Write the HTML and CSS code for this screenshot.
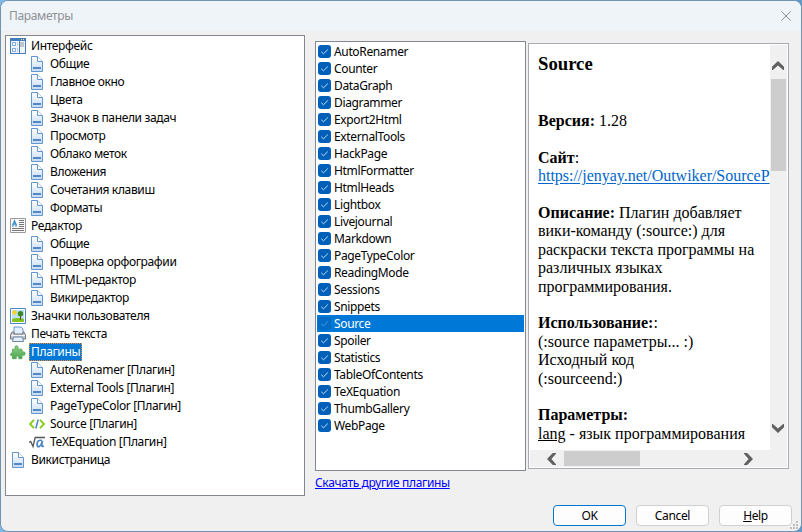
FILE: index.html
```
<!DOCTYPE html>
<html lang="ru">
<head>
<meta charset="utf-8">
<title>Параметры</title>
<link rel="stylesheet" href="styles.css">
</head>
<body>
<svg class="defs" width="0" height="0" aria-hidden="true">
  <defs>
    <linearGradient id="paper" x1="0" y1="0" x2="0" y2="1"><stop offset="0" stop-color="#fff"/><stop offset="1" stop-color="#c4daf4"/></linearGradient>
    <linearGradient id="leaf" x1="0" y1="0" x2="0" y2="1"><stop offset="0" stop-color="#8fd082"/><stop offset="1" stop-color="#4fa552"/></linearGradient>
  </defs>
  <symbol id="page" viewBox="0 0 16 16">
    <path d="M2.5.5h6l5 5v10h-11z" fill="url(#paper)" stroke="#6496d0"/>
    <path d="M8.5.5v5h5" fill="#fff" stroke="#6496d0"/>
    <path d="M4 11h8v2H4z" fill="#5288c8"/>
  </symbol>
  <symbol id="layout" viewBox="0 0 16 16">
    <path d="M0 0h16v16H0z" fill="#437dbe"/><path d="M1 3h8v12H1zM10 3h5v12h-5z" fill="#f0f5fa"/>
    <path d="M2.500 4.500h3v3h-3zM2.500 10.500h3v3h-3z" fill="#fff" stroke="#7ba6d6"/><path d="M7 4h1v4H7zM7 10h1v4H7z" fill="#bdd2e9"/><path d="M10 4h4v5h-4z" fill="#c5c5c5"/><path d="M11 1h1v1h-1zM13 1h1v1h-1z" fill="#ffe37a"/>
  </symbol>
  <symbol id="article" viewBox="0 0 16 16">
    <path d="M.5.5h15v14H.5z" fill="#fafafa" stroke="#999"/>
    <path d="M2.500 7.500 4.500 3l2 4.500M3.500 6h2" fill="none" stroke="#3f91cc" stroke-width="1.400"/><path d="M2 8h2M5 8h2" stroke="#3f91cc"/>
    <path d="M9 2.500h5M9 4.500h5M9 6.500h5M9 8.500h5M2 10.500h12M2 12.500h12" stroke="#666" stroke-width=".9"/>
  </symbol>
  <symbol id="picture" viewBox="0 0 16 16">
    <path d="M.5.5h15v15H.5z" fill="#fff" stroke="#4c89c9"/><path d="M2 2h12v12H2z" fill="#bbe2f7"/><path d="M2 11q5-2 12 0v3H2z" fill="#82c31d"/><circle cx="4.500" cy="4.500" r="2.200" fill="#ffcf27"/><path d="M10 7h1v5h-1z" fill="#6c4b21"/><circle cx="10.500" cy="5.800" r="2.700" fill="#3e8620"/>
  </symbol>
  <symbol id="printer" viewBox="0 0 16 16">
    <path d="M4 8V1h7l2 2v5" fill="#e4f0fd" stroke="#6797cf"/><path d="m2 6-1.500 3v4h15V9L14 6h-1v2H4V6z" fill="#c9cace" stroke="#73767d"/><path d="M1 9.500h14" stroke="#f4f4f4"/><path d="M3.500 11h9l1 4.500h-11z" fill="#e5effb" stroke="#6f88aa"/>
  </symbol>
  <symbol id="puzzle" viewBox="0 0 16 16">
    <path d="M2.500 5.200H5.500Q4 2 6.400 1.700 9 2 7.800 5.200H12v3q3-1.300 3.200 1.300T12 11v3.700H8.700q.8-2.700-1.200-2.700t-1.200 2.700H2.500v-3.200Q0 12 .5 10.200t2-1.500z" fill="url(#leaf)" stroke="#58aa56" stroke-width=".9"/>
  </symbol>
  <symbol id="code" viewBox="0 0 16 16">
    <path d="M5 3.800 1 8l4 4.200M11 3.800 15 8l-4 4.200" fill="none" stroke="#8cc914" stroke-width="1.900"/><path d="m9.200 3.500-2.400 9" stroke="#508acb" stroke-width="1.600"/>
  </symbol>
  <symbol id="root" viewBox="0 0 16 16">
    <path d="M0 8.500 1.700 7.500 4 12.500 6.200 3.500H16" fill="none" stroke="#555" stroke-width="1.300"/><path d="M13 6.500Q8.500 5.300 8 9.700q0 4 2.500 2.700 2-1.400 3-5.700-.9 4.400-.4 5.500.6.700 1.700-.5" fill="none" stroke="#4c86c7" stroke-width="1.700"/>
  </symbol>
  <symbol id="check" viewBox="0 0 13 13"><path d="m3.300 6.800 2.200 2 4.300-4.200" fill="none" stroke="currentColor" stroke-width=".9"/></symbol>
  <symbol id="chevron" viewBox="0 0 12 10"><path d="M0 9V5.800L6 0l6 5.800V9h-.8L6 4.400.8 9z" fill="#606060"/></symbol>
</svg>
<div class="window">
  <header class="titlebar"><span class="title">Параметры</span><svg class="close" viewBox="0 0 10 10"><path d="m.3.3 9.400 9.400M9.700.3.3 9.700" stroke="#8b8f94"/></svg></header>
  <main class="content">
    <ul class="tree">
      <li><svg><use href="#layout"/></svg><span>Интерфейс</span></li>
      <li class="child"><svg><use href="#page"/></svg><span>Общие</span></li>
      <li class="child"><svg><use href="#page"/></svg><span>Главное окно</span></li>
      <li class="child"><svg><use href="#page"/></svg><span>Цвета</span></li>
      <li class="child"><svg><use href="#page"/></svg><span>Значок в панели задач</span></li>
      <li class="child"><svg><use href="#page"/></svg><span>Просмотр</span></li>
      <li class="child"><svg><use href="#page"/></svg><span>Облако меток</span></li>
      <li class="child"><svg><use href="#page"/></svg><span>Вложения</span></li>
      <li class="child"><svg><use href="#page"/></svg><span>Сочетания клавиш</span></li>
      <li class="child"><svg><use href="#page"/></svg><span>Форматы</span></li>
      <li><svg><use href="#article"/></svg><span>Редактор</span></li>
      <li class="child"><svg><use href="#page"/></svg><span>Общие</span></li>
      <li class="child"><svg><use href="#page"/></svg><span>Проверка орфографии</span></li>
      <li class="child"><svg><use href="#page"/></svg><span>HTML-редактор</span></li>
      <li class="child"><svg><use href="#page"/></svg><span>Викиредактор</span></li>
      <li><svg><use href="#picture"/></svg><span>Значки пользователя</span></li>
      <li><svg><use href="#printer"/></svg><span>Печать текста</span></li>
      <li class="selected"><svg><use href="#puzzle"/></svg><span>Плагины</span></li>
      <li class="child"><svg><use href="#page"/></svg><span>AutoRenamer [Плагин]</span></li>
      <li class="child"><svg><use href="#page"/></svg><span>External Tools [Плагин]</span></li>
      <li class="child"><svg><use href="#page"/></svg><span>PageTypeColor [Плагин]</span></li>
      <li class="child"><svg><use href="#code"/></svg><span>Source [Плагин]</span></li>
      <li class="child"><svg><use href="#root"/></svg><span>TeXEquation [Плагин]</span></li>
      <li><svg><use href="#page"/></svg><span>Викистраница</span></li>
    </ul>
    <section class="plugins">
      <ul class="checklist">
        <li><svg><use href="#check"/></svg><span>AutoRenamer</span></li>
        <li><svg><use href="#check"/></svg><span>Counter</span></li>
        <li><svg><use href="#check"/></svg><span>DataGraph</span></li>
        <li><svg><use href="#check"/></svg><span>Diagrammer</span></li>
        <li><svg><use href="#check"/></svg><span>Export2Html</span></li>
        <li><svg><use href="#check"/></svg><span>ExternalTools</span></li>
        <li><svg><use href="#check"/></svg><span>HackPage</span></li>
        <li><svg><use href="#check"/></svg><span>HtmlFormatter</span></li>
        <li><svg><use href="#check"/></svg><span>HtmlHeads</span></li>
        <li><svg><use href="#check"/></svg><span>Lightbox</span></li>
        <li><svg><use href="#check"/></svg><span>Livejournal</span></li>
        <li><svg><use href="#check"/></svg><span>Markdown</span></li>
        <li><svg><use href="#check"/></svg><span>PageTypeColor</span></li>
        <li><svg><use href="#check"/></svg><span>ReadingMode</span></li>
        <li><svg><use href="#check"/></svg><span>Sessions</span></li>
        <li><svg><use href="#check"/></svg><span>Snippets</span></li>
        <li class="selected"><svg><use href="#check"/></svg><span>Source</span></li>
        <li><svg><use href="#check"/></svg><span>Spoiler</span></li>
        <li><svg><use href="#check"/></svg><span>Statistics</span></li>
        <li><svg><use href="#check"/></svg><span>TableOfContents</span></li>
        <li><svg><use href="#check"/></svg><span>TeXEquation</span></li>
        <li><svg><use href="#check"/></svg><span>ThumbGallery</span></li>
        <li><svg><use href="#check"/></svg><span>WebPage</span></li>
      </ul>
      <a class="download" href="#">Скачать другие плагины</a>
    </section>
    <section class="details">
      <article class="doc">
        <h3>Source</h3>
        <p><b>Версия:</b> 1.28</p>
        <p><b>Сайт</b>:<br><a href="#">https://jenyay.net/Outwiker/SourceP</a></p>
        <p><b>Описание:</b> Плагин добавляет<br>вики-команду (:source:) для<br>раскраски текста программы на<br>различных языках<br>программирования.</p>
        <p><b>Использование:</b>:<br>(:source параметры... :)<br>Исходный код<br>(:sourceend:)</p>
        <p><b>Параметры:</b><br><u>lang</u> - язык программирования</p>
      </article>
      <div class="vscroll"><svg class="arrow"><use href="#chevron"/></svg><i class="thumb"></i><svg class="arrow down"><use href="#chevron"/></svg></div>
      <div class="hscroll"><svg class="arrow left"><use href="#chevron"/></svg><i class="thumb"></i><svg class="arrow right"><use href="#chevron"/></svg></div>
    </section>
  </main>
  <footer class="actions"><button class="primary">OK</button><button>Cancel</button><button><u>H</u>elp</button></footer>
  <svg class="grip" viewBox="0 0 9 9"><path d="M6 0h2v2H6zM3 3h2v2H3zM6 3h2v2H6zM0 6h2v2H0zM3 6h2v2H3zM6 6h2v2H6z" fill="#bfbfbf"/></svg>
</div>
</body>
</html>
```
FILE: styles.css
```
* { box-sizing: border-box; }
body { margin: 0; background: linear-gradient(90deg, #7db9e5, #5f98c8); font: 12px/18px "Noto Sans", "Open Sans", sans-serif; color: #000; overflow: hidden; }
ul { margin: 0; padding: 0; list-style: none; }
.defs { position: absolute; }
.window { position: relative; width: 802px; height: 532px; border: 1px solid #6f93b3; border-radius: 8px; background: #f0f0f0; overflow: hidden; display: flex; flex-direction: column; }
.titlebar { height: 30px; flex: none; background: #eff4f9; display: flex; align-items: center; justify-content: space-between; padding: 0 10px 0 8px; color: #8e9195; }
.title { letter-spacing: -.35px; }
.close { width: 10px; height: 10px; }
.content { height: 465px; flex: none; display: flex; align-items: flex-start; padding: 4px 0 0 4px; }
.tree { width: 300px; height: 461px; border: 1px solid #828790; background: #fff; padding: 1px 0 0 4px; letter-spacing: -.35px; }
.tree li { display: flex; align-items: center; height: 18px; white-space: nowrap; }
.tree svg { width: 16px; height: 16px; flex: none; margin-right: 3px; }
.tree .child { padding-left: 19px; }
.tree span { padding: 0 2px; height: 18px; line-height: 17px; }
.tree .selected span { background: #0078d7; color: #fff; outline: 1px dotted #ff8728; outline-offset: -1px; }
.plugins { width: 211px; margin: 6px 0 0 10px; display: flex; flex-direction: column; }
.checklist { height: 430px; border: 1px solid #828790; background: #fff; padding: 1px; letter-spacing: -.35px; }
.checklist li { display: flex; align-items: center; height: 17px; padding-left: 1px; gap: 3px; line-height: 16px; }
.checklist svg { width: 13px; height: 13px; border-radius: 3px; background: #005fb8; color: #dcebf8; }
.checklist .selected { background: #0078d7; color: #fff; }
.checklist .selected svg { background: #006bc7; color: #58a8e5; }
.download { margin-top: 3px; color: #00f; align-self: flex-start; letter-spacing: -.34px; white-space: nowrap; }
.details { width: 261px; height: 426px; margin: 8px 0 0 2px; padding: 1px; border: 1px solid #a9abb2; background: #fff; display: grid; grid-template: 405px 17px / 240px 17px; }
.doc { overflow: hidden; padding: 8px 0 0 8px; font: 16px/18.4px "Liberation Serif", serif; white-space: nowrap; }
.doc h3 { margin: 0 0 37px; font-size: 18.72px; line-height: 22px; }
.doc p { margin: 0 0 18.4px; }
.doc a { color: #0066cc; text-underline-offset: 2px; letter-spacing: -.02px; }
.vscroll, .hscroll { background: #f0f0f0; display: flex; align-items: center; }
.vscroll { flex-direction: column; }
.hscroll { grid-column: 1 / 3; width: 257px; }
.arrow { width: 12px; height: 10px; flex: none; }
.thumb { background: #cdcdcd; flex: none; }
.vscroll .thumb { width: 15px; height: 92px; margin-top: 8px; }
.vscroll .arrow { margin-top: 16px; margin-right: 1px; }
.vscroll .down { margin-top: auto; margin-bottom: 17px; transform: rotate(180deg); }
.hscroll .thumb { width: 76px; height: 15px; margin-left: 6px; }
.hscroll .left { margin-left: 16px; transform: rotate(-90deg); }
.hscroll .right { margin-left: auto; margin-right: 33px; transform: rotate(90deg); }
.actions { margin-top: 9px; display: flex; gap: 10px; justify-content: flex-end; padding-right: 9px; }
.actions button { width: 73px; height: 21px; border: 1px solid #d0d0d0; border-radius: 4px; background: #fdfdfd; padding: 0; font: 12px/18px "Noto Sans", sans-serif; letter-spacing: -.35px; }
.actions .primary { border-color: #0078d4; }
.grip { position: absolute; right: 2px; bottom: 1px; width: 9px; height: 9px; }
```
